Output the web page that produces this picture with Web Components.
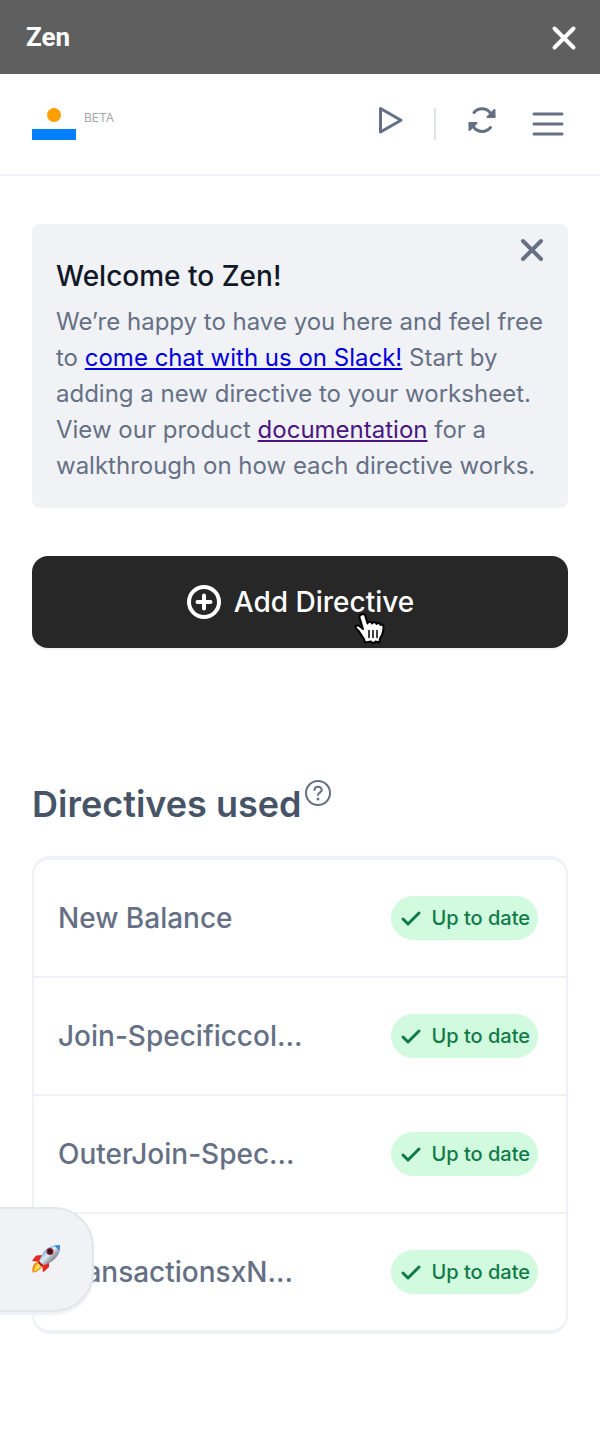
<!DOCTYPE html>
<html lang="en">
<head>
<meta charset="utf-8">
<meta name="viewport" content="width=device-width, initial-scale=1">
<title>Zen</title>
<style>
    :root {
        --bar: #5f5f5f;
        --slate: #667085;
        --slate-dark: #475467;
        --black: #101828;
        --surface: #f0f2f6;
        --line: #f0f1f6;
        --line-dark: #e2e5ea;
    }
    body {
        margin: 0;
        background: white;
        color: var(--slate);
        font-family: Inter, "Liberation Sans", sans-serif;
        font-size: 24px;
    }
    main {
        position: relative;
        padding: 48px 32px 100px;
    }
</style>
</head>
<body>
<z-titlebar>Zen</z-titlebar>
<z-toolbar>Beta</z-toolbar>
<main>
    <z-notice>
        <span slot="title">Welcome to Zen!</span>
        We’re happy to have you here and feel free to <a href="#slack">come chat with us on Slack!</a>
        Start by adding a new directive to your worksheet. View our product
        <a href="#docs" class="seen">documentation</a> for a walkthrough on how each directive works.
    </z-notice>
    <z-add>Add Directive</z-add>
    <z-directives>
        <span slot="title">Directives used</span>
        <z-directive>New Balance</z-directive>
        <z-directive>Join-Specificcol…</z-directive>
        <z-directive>OuterJoin-Spec…</z-directive>
        <z-directive>TransactionsxN…</z-directive>
    </z-directives>
</main>

<script>
const button = `
    button {
        margin: 0;
        padding: 0;
        border: none;
        background: none;
        color: inherit;
        font: inherit;
        cursor: pointer;
    }
    svg {
        display: block;
        fill: none;
        stroke: currentColor;
        stroke-linecap: round;
        stroke-linejoin: round;
    }
`;

class Titlebar extends HTMLElement {
    constructor() {
        super();

        const shadow = this.attachShadow({mode: 'open'});
        shadow.innerHTML = `
            <style>
                ${button}
                :host {
                    display: flex;
                    align-items: center;
                    justify-content: space-between;
                    height: 74px;
                    padding: 0 20px 0 26px;
                    background: var(--bar);
                    color: white;
                }
                h1 {
                    margin: 0;
                    font: bold 26px/32px Roboto, sans-serif;
                }
            </style>
            <h1><slot></slot></h1>
            <button type="button" aria-label="Close panel">
                <svg width="32" height="32" stroke-width="4"><path d="M6.500 7.500l19 19m0-19l-19 19"/></svg>
            </button>
        `;
    }
}

class Toolbar extends HTMLElement {
    constructor() {
        super();

        const shadow = this.attachShadow({mode: 'open'});
        shadow.innerHTML = `
            <style>
                ${button}
                :host {
                    display: flex;
                    align-items: center;
                    justify-content: space-between;
                    padding: 30px 32px;
                    border-bottom: 2px solid var(--line);
                }
                .logo, nav {
                    display: flex;
                    gap: 8px;
                }
                .logo span {
                    color: #a5a8ae;
                    font-size: 12px;
                    line-height: 20px;
                    text-transform: uppercase;
                }
                .logo svg {
                    stroke: none;
                }
                nav {
                    align-items: center;
                    gap: 26px;
                }
                hr {
                    width: 2px;
                    height: 32px;
                    margin: 0;
                    border: none;
                    background: #e0e2ea;
                }
            </style>
            <div class="logo">
                <svg width="44" height="32" role="img" aria-label="Zen logo">
                    <circle cx="22" cy="7" r="7" fill="#ff9f00"/>
                    <path fill="#007fff" d="M0 21h44v11H0z"/>
                </svg>
                <span><slot></slot></span>
            </div>
            <nav>
                <button type="button" aria-label="Run">
                    <svg width="40" height="40" stroke-width="3"><path d="M12.500 4.500v23.500L33 16.200z"/></svg>
                </button>
                <hr>
                <button type="button" aria-label="Refresh">
                    <svg width="40" height="40" stroke-width="3">
                        <path d="M12 8.500C16 3.500 24 3.500 28 8.500l4 4M28.500 23.500C24 28.700 16 28.700 12 23.500l-4-4"/>
                        <path fill="currentColor" stroke-width="2" d="M32.500 6v7h-7zM7.500 26v-7h7z"/>
                    </svg>
                </button>
                <button type="button" aria-label="Menu">
                    <svg width="40" height="40" stroke-width="3"><path d="M6 10h28M6 20h28M6 30h28"/></svg>
                </button>
            </nav>
        `;
    }
}

class Notice extends HTMLElement {
    constructor() {
        super();

        const shadow = this.attachShadow({mode: 'open'});
        shadow.innerHTML = `
            <style>
                ${button}
                :host {
                    display: block;
                    position: relative;
                    padding: 32px 24px 24px;
                    border-radius: 8px;
                    background: var(--surface);
                }
                h2 {
                    margin: 0 0 8px;
                    color: var(--black);
                    font-size: 28px;
                    font-weight: 500;
                    line-height: 40px;
                }
                p {
                    margin: 0;
                    line-height: 36px;
                }
                ::slotted(a) {
                    color: #0000e0;
                }
                ::slotted(a.seen) {
                    color: #4b1680;
                }
                button {
                    position: absolute;
                    top: 10px;
                    right: 20px;
                }
            </style>
            <h2><slot name="title"></slot></h2>
            <p><slot></slot></p>
            <button type="button" aria-label="Dismiss">
                <svg width="32" height="32" stroke-width="4"><path d="M7 7l18 18m0-18l-18 18"/></svg>
            </button>
        `;

        shadow.querySelector('button').addEventListener('click', () => this.remove());
    }
}

class Add extends HTMLElement {
    constructor() {
        super();

        const shadow = this.attachShadow({mode: 'open'});
        shadow.innerHTML = `
            <style>
                ${button}
                :host {
                    display: block;
                    position: relative;
                    margin-top: 48px;
                }
                button {
                    display: flex;
                    align-items: center;
                    justify-content: center;
                    gap: 12px;
                    width: 100%;
                    height: 92px;
                    border-radius: 16px;
                    background: #272727;
                    box-shadow: 0 2px 0 var(--line);
                    color: white;
                    font-size: 28px;
                    font-weight: 500;
                }
                .pointer {
                    position: absolute;
                    top: 56px;
                    left: calc(50% + 54px);
                    pointer-events: none;
                }
            </style>
            <button type="button">
                <svg width="36" height="36" stroke-width="4">
                    <circle cx="18" cy="18" r="15"/>
                    <path d="M18 11.500v13M11.500 18h13"/>
                </svg>
                <slot></slot>
            </button>
            <svg class="pointer" width="32" height="34">
                <path fill="white" stroke="black" stroke-width="2" d="M7.500 2.500c2-1 3.500 0 4 2l2 7c1-2.500 4-2 4.500 0 1-2 4-1.500 4.500.5 1-1.500 3.500-1 4 1 1.500-1 3 0 3 2 0 6-1 8-3.500 11.500l-.5 4-4-1-2 2-2.500-2-6 1c0-4-3-5.500-5-9.500-1.500-3-4.500-4-4.500-6s3-2 4.500-.5l3 2.500-3.500-11.500c-.3-1.500 0-2.500 2-3z"/>
                <path stroke="black" stroke-width="1.500" d="M15 18.500v7M19 18.500v7M23 18.500v7"/>
            </svg>
        `;
    }
}

class Directive extends HTMLElement {
    constructor() {
        super();

        const shadow = this.attachShadow({mode: 'open'});
        shadow.innerHTML = `
            <style>
                ${button}
                :host {
                    display: flex;
                    align-items: center;
                    justify-content: space-between;
                    height: 116px;
                    padding: 0 28px 0 24px;
                    font-size: 28px;
                    font-weight: 500;
                }
                :host(:not(:last-child)) {
                    border-bottom: 2px solid var(--line);
                }
                .status {
                    display: flex;
                    align-items: center;
                    gap: 8px;
                    padding: 0 8px;
                    border-radius: 22px;
                    background: #d1fadf;
                    color: #107a48;
                    font-size: 20px;
                    line-height: 44px;
                }
            </style>
            <slot></slot>
            <span class="status">
                <svg width="24" height="24" stroke-width="3"><path d="M4 13l5 5L20 7"/></svg>
                Up to date
            </span>
        `;
    }
}

class Directives extends HTMLElement {
    constructor() {
        super();

        const shadow = this.attachShadow({mode: 'open'});
        shadow.innerHTML = `
            <style>
                ${button}
                :host {
                    display: block;
                    position: relative;
                    margin-top: 132px;
                }
                header {
                    display: flex;
                    gap: 2px;
                    margin-bottom: 28px;
                }
                h2 {
                    margin: 0;
                    color: var(--slate-dark);
                    font-size: 36px;
                    font-weight: 600;
                    line-height: 48px;
                }
                header button {
                    align-self: flex-start;
                }
                .list {
                    border: solid var(--line);
                    border-width: 4px 2px;
                    border-radius: 18px;
                }
                /* drawer handle, hangs off the left edge over the list */
                .drawer {
                    position: absolute;
                    left: -34px;
                    bottom: 22px;
                    display: flex;
                    align-items: center;
                    justify-content: flex-end;
                    width: 96px;
                    height: 105px;
                    padding-right: 31px;
                    box-sizing: border-box;
                    border: 2px solid var(--line-dark);
                    border-radius: 0 40px 40px 0;
                    background: var(--surface);
                    box-shadow: 0 3px 2px var(--line);
                }
                .drawer svg {
                    stroke: none;
                }
            </style>
            <header>
                <h2><slot name="title"></slot></h2>
                <button type="button" aria-label="About directives">
                    <svg width="30" height="26" viewBox="0 0 30 26" stroke-width="2">
                        <circle cx="15" cy="13" r="12"/>
                        <path d="M11.500 10c.5-4.500 7.500-4 7.200 0 0 2.500-3.700 2.700-3.700 5"/>
                        <path stroke-width="3" d="M15 19v0"/>
                    </svg>
                </button>
            </header>
            <div class="list"><slot></slot></div>
            <button class="drawer" type="button" aria-label="Launch">
                <svg width="30" height="32" viewBox="0 0 30 32">
                    <defs>
                        <linearGradient id="hull" x1="0" y1="0" x2="1" y2="1">
                            <stop offset=".25" stop-color="#58a5dd"/>
                            <stop offset=".45" stop-color="#e3edf5"/>
                            <stop offset=".6" stop-color="#a4aebb"/>
                            <stop offset=".85" stop-color="#4c5663"/>
                        </linearGradient>
                    </defs>
                    <path fill="#e8281c" d="M13 11L5 11.500 1 17l8 1zM18 17v6l-6 5.500-1-9z"/>
                    <path fill="#f28c1a" d="M7 18c-5 1-6 5-5.500 10.500C6 28 9.500 26 11 22z"/>
                    <path fill="#ffe14a" d="M8 19c-3 1.500-4.500 4-5 8 3.500-1 5.500-2.500 7-5z"/>
                    <path fill="url(#hull)" d="M29 1C22 .5 16 3 12 9l-4 8 4.500 4.500L20 18C27 13 29.500 8 29 1z"/>
                    <path fill="#3d8fd4" d="M29 1c-2-.3-4 0-6 .5L28.500 7c.4-2 .6-4 .5-6z"/>
                    <path fill="#b31217" d="M8 17l4.500 4.500-2 1L7 19z"/>
                    <circle cx="19" cy="7.500" r="3.500" fill="#a51c22"/>
                    <circle cx="19" cy="7.500" r="2.200" fill="#271a25"/>
                </svg>
            </button>
        `;
    }
}

customElements.define('z-titlebar', Titlebar);
customElements.define('z-toolbar', Toolbar);
customElements.define('z-notice', Notice);
customElements.define('z-add', Add);
customElements.define('z-directive', Directive);
customElements.define('z-directives', Directives);
</script>
</body>
</html>
